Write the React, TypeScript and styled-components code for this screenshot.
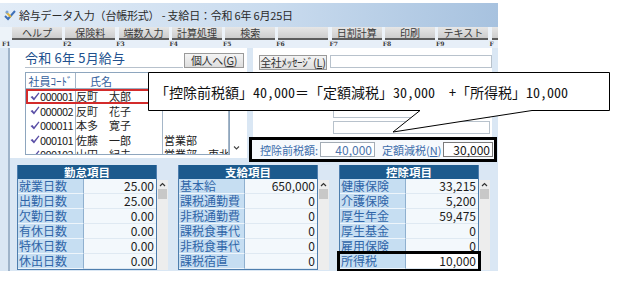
import React from "react";
import styled, { createGlobalStyle } from "styled-components";

const GlobalStyle = createGlobalStyle`
  html, body {
    margin: 0;
    padding: 0;
    background: #ffffff;
  }
  body {
    font-family: "Noto Sans CJK JP", "DejaVu Sans", sans-serif;
    font-size: 11px;
    color: #222;
  }
`;

const fkeys = ["F1", "F2", "F3", "F4", "F5", "F6", "F7", "F8", "F9", "F"];
const tools = ["ヘルプ", "保険料", "端数入力", "計算処理", "検索", "", "日割計算", "印刷", "テキスト", ""];

const employees = [
  { code: "000001", name: "反町　太郎", dept: "", marked: true },
  { code: "000002", name: "反町　花子", dept: "" },
  { code: "000011", name: "本多　寛子", dept: "" },
  { code: "000101", name: "佐藤　一郎", dept: "営業部" },
  { code: "000102", name: "山田　紀夫", dept: "営業部　東北支店" },
];

type Item = { label: string; value: string; marked?: boolean };

const kintai: Item[] = [
  { label: "就業日数", value: "25.00" },
  { label: "出勤日数", value: "25.00" },
  { label: "欠勤日数", value: "0.00" },
  { label: "有休日数", value: "0.00" },
  { label: "特休日数", value: "0.00" },
  { label: "休出日数", value: "0.00" },
];

const shikyu: Item[] = [
  { label: "基本給", value: "650,000" },
  { label: "課税通勤費", value: "0" },
  { label: "非税通勤費", value: "0" },
  { label: "課税食事代", value: "0" },
  { label: "非税食事代", value: "0" },
  { label: "課税宿直", value: "0" },
];

const kojo: Item[] = [
  { label: "健康保険", value: "33,215" },
  { label: "介護保険", value: "5,200" },
  { label: "厚生年金", value: "59,475" },
  { label: "厚生基金", value: "0" },
  { label: "雇用保険", value: "0" },
  { label: "所得税", value: "10,000", marked: true },
];

const Page = styled.div`
  position: relative;
  width: 632px;
  height: 295px;
  padding-top: 3px;
  box-sizing: border-box;
`;

const Window = styled.div`
  width: 498px;
  height: 268px;
  display: flex;
  flex-direction: column;
  background: #dae7f4;
  overflow: hidden;
`;

const TitleBar = styled.div`
  height: 24px;
  display: flex;
  align-items: center;
  gap: 3px;
  padding-left: 4px;
  background: linear-gradient(to right, #e2ecf7, #c9dbee 55%, #a7c2df);
`;

const TitleText = styled.span`
  font-size: 11px;
  color: #2a2a2a;
  letter-spacing: -0.2px;
`;

const Toolbar = styled.div`
  height: 13px;
  display: flex;
  gap: 3.3px;
  padding-left: 12px;
  background: #edf3f9;
`;

const ToolButton = styled.div`
  flex: 0 0 50px;
  height: 13px;
  box-sizing: border-box;
  background: linear-gradient(#e6e6e6, #cdcdcd);
  border-bottom: 2px solid #5c5c5c;
  font-size: 10px;
  line-height: 11px;
  color: #3a3a3a;
  text-align: center;
`;

const FRow = styled.div`
  height: 8px;
  display: flex;
  padding-left: 2px;
  background: #e7eff8;
`;

const FKey = styled.span<{ $first?: boolean }>`
  flex: 0 0 ${({ $first }) => ($first ? "61px" : "53.3px")};
  font-family: "DejaVu Serif", serif;
  font-weight: bold;
  font-size: 6px;
  line-height: 8px;
  color: #333;
`;

const Main = styled.div`
  flex: 1;
  display: flex;
  flex-direction: column;
  margin-left: 8px;
  border-left: 2px solid #9fb4ca;
`;

const TopArea = styled.div`
  height: 115px;
  display: flex;
`;

const LeftPanel = styled.div`
  width: 237px;
  height: 110px;
  box-sizing: border-box;
  padding: 4px 0 0 15px;
  background: #ffffff;
  overflow: hidden;
`;

const PanelHead = styled.div`
  display: flex;
  align-items: flex-end;
  height: 16px;
`;

const PeriodTitle = styled.div`
  width: 158px;
  height: 17px;
  box-sizing: border-box;
  border-bottom: 1px solid #b7c1cc;
  font-size: 13px;
  line-height: 14px;
  color: #21508e;
  letter-spacing: 0.2px;
`;

const SmallButton = styled.div<{ $w: number }>`
  width: ${({ $w }) => $w}px;
  height: 15px;
  box-sizing: border-box;
  margin-left: 1px;
  border: 1px solid #9a9a9a;
  background: linear-gradient(#f4f4f4, #dedede);
  font-size: 11px;
  line-height: 13px;
  text-align: center;
  color: #333;
  white-space: nowrap;
  letter-spacing: -0.3px;
`;

const Key = styled.span`
  text-decoration: underline;
`;

const ListWrap = styled.div`
  display: flex;
  margin-top: 4px;
`;

const ListBox = styled.div`
  width: 205px;
  height: 83px;
  box-sizing: border-box;
  border: 1px solid #8ea6be;
  overflow: hidden;
  background: #fff;
`;

const ListRow = styled.div<{ $head?: boolean; $marked?: boolean }>`
  display: grid;
  grid-template-columns: 50px 87px 1fr;
  height: ${({ $head }) => ($head ? "16px" : "14.5px")};
  box-sizing: border-box;
  border-bottom: ${({ $head }) => ($head ? "1px solid #9cb0c4" : "none")};
  outline: ${({ $marked }) => ($marked ? "2px solid #d32b2b" : "none")};
  outline-offset: -2px;
  font-size: 11px;
  line-height: 14px;
`;

const Cell = styled.div<{ $align?: string; $pad?: number; $blue?: boolean }>`
  display: flex;
  align-items: center;
  justify-content: ${({ $align }) => $align || "flex-start"};
  padding-left: ${({ $pad }) => $pad || 0}px;
  border-right: 1px solid #a5b6c8;
  color: ${({ $blue }) => ($blue ? "#34609c" : "#222")};
  white-space: nowrap;
  overflow: hidden;
`;

const Code = styled.span`
  margin-left: auto;
  margin-right: 2px;
  letter-spacing: -0.6px;
`;

const ListScroll = styled.div`
  width: 12px;
  height: 83px;
  display: flex;
  align-items: flex-end;
  justify-content: center;
  padding-bottom: 4px;
  box-sizing: border-box;
`;

const RightColumn = styled.div`
  width: 248px;
  margin-left: 2px;
  display: flex;
  flex-direction: column;
`;

const RightPanel = styled.div`
  width: 239px;
  height: 89px;
  margin-left: 4px;
  box-sizing: border-box;
  padding: 7px 0 0 5px;
  background: #fff;
  display: flex;
  flex-direction: column;
  gap: 3px;
`;

const MsgRow = styled.div`
  display: flex;
  gap: 3px;
`;

const Field = styled.div<{ $w: number; $indent?: number }>`
  width: ${({ $w }) => $w}px;
  height: 13px;
  margin-left: ${({ $indent }) => $indent || 0}px;
  box-sizing: border-box;
  border: 1px solid #b8c2cc;
  background: #fff;
`;

const TaxRow = styled.div`
  height: 25px;
  box-sizing: border-box;
  border: 3px solid #000;
  background: #f6f9fc;
  display: flex;
  align-items: center;
  padding-left: 8px;
`;

const TaxLabel = styled.span<{ $w: number; $gap?: number }>`
  width: ${({ $w }) => $w}px;
  margin-left: ${({ $gap }) => $gap || 0}px;
  font-size: 11px;
  color: #3b6cab;
  white-space: nowrap;
`;

const TaxField = styled.div<{ $w: number; $dark?: boolean }>`
  width: ${({ $w }) => $w}px;
  height: 15px;
  box-sizing: border-box;
  border: 1px solid ${({ $dark }) => ($dark ? "#7a7a7a" : "#a3acb5")};
  background: #fff;
  text-align: right;
  padding-right: 2px;
  font-size: 12px;
  line-height: 13px;
  color: ${({ $dark }) => ($dark ? "#151515" : "#4d74ab")};
`;

const BottomArea = styled.div`
  display: flex;
  gap: 10px;
  padding: 2px 0 0 7px;
`;

const Group = styled.div`
  display: flex;
`;

const Table = styled.div`
  width: 140px;
  box-sizing: border-box;
  border: 1px solid #4e7eae;
  border-top: none;
`;

const TableHead = styled.div`
  height: 14px;
  background: #1c5a8d;
  color: #fff;
  font-weight: bold;
  font-size: 11.5px;
  line-height: 14px;
  text-align: center;
`;

const ItemRow = styled.div<{ $marked?: boolean }>`
  display: grid;
  grid-template-columns: 65px 1fr;
  height: 15px;
  outline: ${({ $marked }) => ($marked ? "3px solid #000" : "none")};
  position: relative;
  z-index: ${({ $marked }) => ($marked ? 1 : 0)};
`;

const ItemLabel = styled.div`
  background: #c6def2;
  border-bottom: 1px solid #eef5fb;
  color: #2f65a8;
  font-size: 12px;
  line-height: 14px;
  padding-left: 1px;
  white-space: nowrap;
`;

const ItemValue = styled.div<{ $marked?: boolean }>`
  background: ${({ $marked }) => ($marked ? "#ffffff" : "#f3f8fc")};
  border-left: 1px solid #8fb0cf;
  border-bottom: 1px solid #dfe9f2;
  color: #1b1b1b;
  font-size: 12px;
  line-height: 14px;
  text-align: right;
  padding-right: 2px;
`;

const VScroll = styled.div`
  width: 11px;
  margin-top: 15px;
  height: 90px;
  background: #ededed;
  display: flex;
  flex-direction: column;
  align-items: center;
`;

const Thumb = styled.div`
  width: 9px;
  height: 10px;
  background: #c8c8c8;
`;

const Callout = styled.div`
  position: absolute;
  left: 148px;
  top: 72px;
  width: 463px;
  height: 62px;
`;

const CalloutText = styled.div`
  position: absolute;
  left: 7px;
  top: 0;
  height: 39px;
  display: flex;
  align-items: center;
  font-family: "Noto Sans Mono CJK JP", "Noto Sans CJK JP", monospace;
  font-size: 14px;
  color: #111;
  white-space: pre;
`;

const Check = () => (
  <svg width="10" height="9" viewBox="0 0 10 9">
    <path d="M0.5 5 L2.5 4 L4 6 L8.5 0.5 L9.5 1.2 L4 8.5 Z" fill="#5a4fa6" />
  </svg>
);

const AppIcon = () => (
  <svg width="12" height="12" viewBox="0 0 12 12">
    <path d="M1 7 L4 10 L11 2" stroke="#3d6fb8" strokeWidth="2" fill="none" />
    <path d="M2 3 L7 8" stroke="#e2b63a" strokeWidth="2" />
    <circle cx="3" cy="3" r="1.5" fill="#7aa4d8" />
  </svg>
);

const ItemTable = ({ title, items }: { title: string; items: Item[] }) => (
  <Group>
    <Table>
      <TableHead>{title}</TableHead>
      {items.map((it) => (
        <ItemRow key={it.label} $marked={it.marked}>
          <ItemLabel>{it.label}</ItemLabel>
          <ItemValue $marked={it.marked}>{it.value}</ItemValue>
        </ItemRow>
      ))}
    </Table>
    <VScroll>
      <svg width="7" height="9" viewBox="0 0 7 9">
        <path d="M1 6 L3.5 3.5 L6 6" stroke="#333" strokeWidth="1.2" fill="none" />
      </svg>
      <Thumb />
    </VScroll>
  </Group>
);

export default function App() {
  return (
    <Page>
      <GlobalStyle />
      <Window>
        <TitleBar>
          <AppIcon />
          <TitleText>給与データ入力（台帳形式） - 支給日：令和 6年 6月25日</TitleText>
        </TitleBar>
        <Toolbar>
          {tools.map((t, i) => (
            <ToolButton key={i}>{t}</ToolButton>
          ))}
        </Toolbar>
        <FRow>
          {fkeys.map((f, i) => (
            <FKey key={i} $first={i === 0}>
              {f}
            </FKey>
          ))}
        </FRow>
        <Main>
          <TopArea>
            <LeftPanel>
              <PanelHead>
                <PeriodTitle>令和 6年 5月給与</PeriodTitle>
                <SmallButton $w={60}>
                  個人へ(<Key>G</Key>)
                </SmallButton>
              </PanelHead>
              <ListWrap>
                <ListBox>
                  <ListRow $head>
                    <Cell $align="center" $blue>
                      社員ｺｰﾄﾞ
                    </Cell>
                    <Cell $pad={14} $blue>
                      氏名
                    </Cell>
                    <Cell />
                  </ListRow>
                  {employees.map((e) => (
                    <ListRow key={e.code} $marked={e.marked}>
                      <Cell $pad={4}>
                        <Check />
                        <Code>{e.code}</Code>
                      </Cell>
                      <Cell>{e.name}</Cell>
                      <Cell $pad={1}>{e.dept}</Cell>
                    </ListRow>
                  ))}
                </ListBox>
                <ListScroll>
                  <svg width="7" height="6" viewBox="0 0 7 6">
                    <path d="M1 1.5 L3.5 4 L6 1.5" stroke="#444" strokeWidth="1.1" fill="none" />
                  </svg>
                </ListScroll>
              </ListWrap>
            </LeftPanel>
            <RightColumn>
              <RightPanel>
                <MsgRow>
                  <SmallButton $w={68}>
                    全社ﾒｯｾｰｼﾞ(<Key>L</Key>)
                  </SmallButton>
                  <Field $w={163} />
                </MsgRow>
                <Field $w={157} $indent={75} />
                <Field $w={157} $indent={75} />
                <Field $w={157} $indent={75} />
                <Field $w={157} $indent={75} />
              </RightPanel>
              <TaxRow>
                <TaxLabel $w={60}>控除前税額:</TaxLabel>
                <TaxField $w={55}>40,000</TaxField>
                <TaxLabel $w={61} $gap={7}>
                  定額減税(<Key>N</Key>)
                </TaxLabel>
                <TaxField $w={50} $dark>
                  30,000
                </TaxField>
              </TaxRow>
            </RightColumn>
          </TopArea>
          <BottomArea>
            <ItemTable title="勤怠項目" items={kintai} />
            <ItemTable title="支給項目" items={shikyu} />
            <ItemTable title="控除項目" items={kojo} />
          </BottomArea>
        </Main>
      </Window>
      <Callout>
        <svg width="463" height="62" viewBox="0 0 463 62">
          <polygon
            points="0.5,0.5 461.5,0.5 461.5,38.5 384,38.5 245,60 272,38.5 0.5,38.5"
            fill="#fff"
            stroke="#000"
            strokeWidth="1"
          />
        </svg>
        <CalloutText>「控除前税額」40,000＝「定額減税」30,000　+「所得税」10,000</CalloutText>
      </Callout>
    </Page>
  );
}
